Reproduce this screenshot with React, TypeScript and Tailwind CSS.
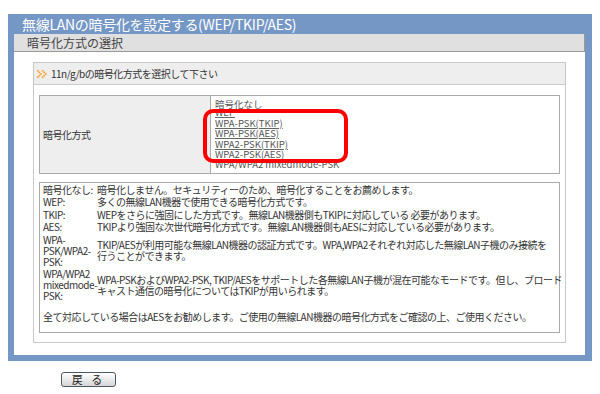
import React from "react";

const options = [
  "WEP",
  "WPA-PSK(TKIP)",
  "WPA-PSK(AES)",
  "WPA2-PSK(TKIP)",
  "WPA2-PSK(AES)",
  "WPA/WPA2 mixedmode-PSK",
];

const notes: { label: string[]; text: string[] }[] = [
  { label: ["暗号化なし:"], text: ["暗号化しません。セキュリティーのため、暗号化することをお薦めします。"] },
  { label: ["WEP:"], text: ["多くの無線LAN機器で使用できる暗号化方式です。"] },
  { label: ["TKIP:"], text: ["WEPをさらに強固にした方式です。無線LAN機器側もTKIPに対応している 必要があります。"] },
  { label: ["AES:"], text: ["TKIPより強固な次世代暗号化方式です。無線LAN機器側もAESに対応している必要があります。"] },
  {
    label: ["WPA-", "PSK/WPA2-", "PSK:"],
    text: [
      "TKIP/AESが利用可能な無線LAN機器の認証方式です。WPA,WPA2それぞれ対応した無線LAN子機のみ接続を",
      "行うことができます。",
    ],
  },
  {
    label: ["WPA/WPA2", "mixedmode-", "PSK:"],
    text: [
      "WPA-PSKおよびWPA2-PSK, TKIP/AESをサポートした各無線LAN子機が混在可能なモードです。但し、ブロード",
      "キャスト通信の暗号化についてはTKIPが用いられます。",
    ],
  },
];

// orange ">>" bullet drawn as dots
function Bullet() {
  const cells = [
    [0, 0], [1, 1], [2, 2], [1, 3], [0, 4],
    [3, 0], [4, 1], [5, 2], [4, 3], [3, 4],
  ];
  return (
    <svg width="10" height="8" viewBox="0 0 10 8" className="shrink-0">
      {cells.map(([c, r], i) => (
        <rect key={i} x={c * 1.6} y={r * 1.6} width="1.6" height="1.6" fill="#ff9a1a" />
      ))}
    </svg>
  );
}

function OptionLink({ children }: { children: React.ReactNode }) {
  return (
    <div className="h-[10.4px] whitespace-nowrap text-[9.5px] leading-[10.4px] tracking-normal text-[#555] underline decoration-[#666]">
      {children}
    </div>
  );
}

export default function App() {
  return (
    <div className="min-h-screen bg-white pl-2 pt-[14px] font-['Noto_Sans_CJK_JP',sans-serif] text-[10px] tracking-[-0.5px] text-[#333]">
      <div className="w-[584px] bg-[#7597c6] pb-[6px] pl-[6px] pr-[7px]">
        <div className="h-[20px] pl-2 text-[14px] leading-[20px] tracking-[-0.3px] text-white">
          無線LANの暗号化を設定する(WEP/TKIP/AES)
        </div>
        <div className="bg-white">
          <div className="h-[18px] border-b border-r border-[#999] bg-[#e0e0e0] pl-[13px] text-[12px] leading-[17px] tracking-normal text-[#444]">
            暗号化方式の選択
          </div>
          <div className="px-[19px] pb-[12px] pt-[10px]">
            <div className="border border-[#c8c8c8]">
              <div className="flex h-[22px] items-center gap-[4px] border-b border-[#ccc] bg-[#eeeeee] pl-[3px]">
                <Bullet />
                <span>11n/g/bの暗号化方式を選択して下さい</span>
              </div>

              <div className="px-[5px] pb-[9px] pt-[10px]">
                {/* selection table */}
                <div className="relative flex h-[79px] border border-[#aaa]">
                  <div className="flex w-[171px] items-center border-r border-[#aaa] bg-[#eeeeee] pl-[3px]">
                    暗号化方式
                  </div>
                  <div className="flex-1 pl-[4px] pt-[3px]">
                    <OptionLink>暗号化なし</OptionLink>
                    <div className="mt-[3px] h-[57px] overflow-hidden">
                      <div className="-mt-[5px]">
                        {options.map((o) => (
                          <OptionLink key={o}>{o}</OptionLink>
                        ))}
                      </div>
                    </div>
                  </div>
                  <div className="pointer-events-none absolute left-[163px] top-[13px] h-[54px] w-[145px] rounded-[10px] border-4 border-[#ff0000]" />
                </div>

                {/* description */}
                <div className="mt-[8px] h-[151px] border border-[#aaa] pl-[3px]">
                  <div className="flex flex-col">
                    {notes.map((n, i) => (
                      <div key={i} className="flex items-center py-[0.75px] leading-[11px]">
                        <div className="w-[54px] shrink-0 whitespace-nowrap">
                          {n.label.map((l) => (
                            <div key={l}>{l}</div>
                          ))}
                        </div>
                        <div className="whitespace-nowrap">
                          {n.text.map((t) => (
                            <div key={t}>{t}</div>
                          ))}
                        </div>
                      </div>
                    ))}
                  </div>
                  <div className="mt-[9px] leading-[11px]">
                    全て対応している場合はAESをお勧めします。ご使用の無線LAN機器の暗号化方式をご確認の上、ご使用ください。
                  </div>
                </div>
              </div>
            </div>
          </div>
        </div>
      </div>

      <button className="ml-[53px] mt-[11px] flex h-[15px] w-[55px] items-center justify-center rounded-[3px] border border-[#4c5866] bg-gradient-to-b from-white to-[#d6d6d6] text-[11px] leading-none tracking-[3px] text-[#222]">
        戻 る
      </button>
    </div>
  );
}
